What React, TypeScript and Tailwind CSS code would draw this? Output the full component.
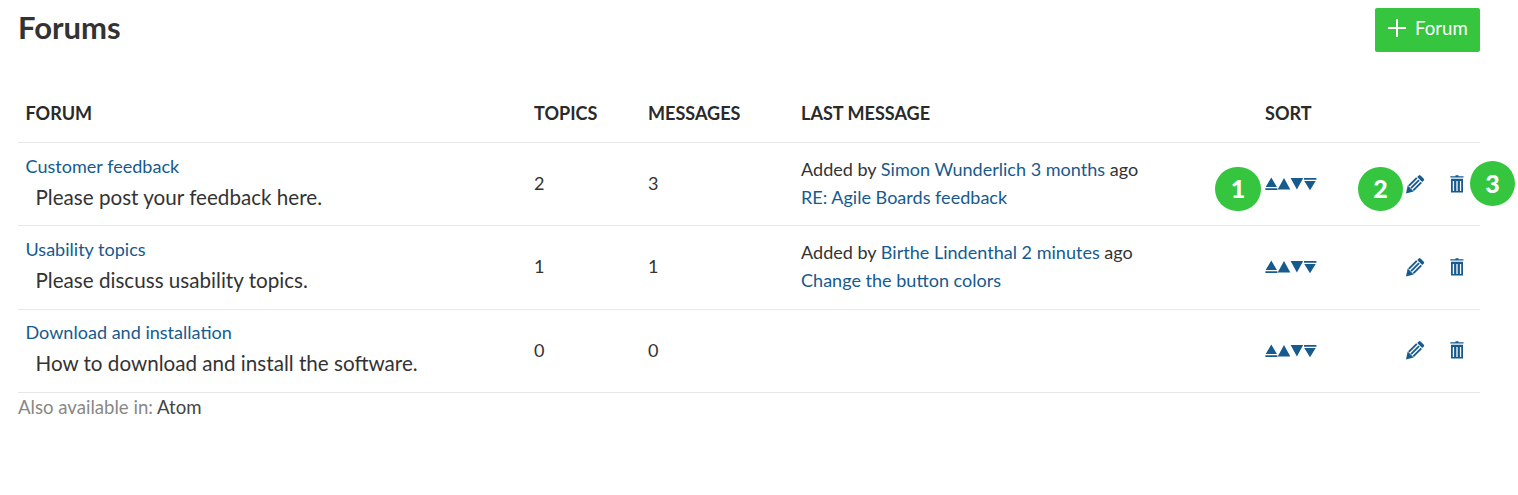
import React from "react";

type Message = { author: string; age: string; subject: string };
type Forum = {
  name: string;
  description: string;
  topics: number;
  messages: number;
  last?: Message;
};

const forums: Forum[] = [
  {
    name: "Customer feedback",
    description: "Please post your feedback here.",
    topics: 2,
    messages: 3,
    last: { author: "Simon Wunderlich", age: "3 months", subject: "RE: Agile Boards feedback" },
  },
  {
    name: "Usability topics",
    description: "Please discuss usability topics.",
    topics: 1,
    messages: 1,
    last: { author: "Birthe Lindenthal", age: "2 minutes", subject: "Change the button colors" },
  },
  {
    name: "Download and installation",
    description: "How to download and install the software.",
    topics: 0,
    messages: 0,
  },
];

const columns = "grid grid-cols-[508.5px_114px_153px_464px_140.5px_1fr] pl-[7.5px]";
const link = "text-[#175a8e]";

function SortIcons() {
  return (
    <svg width="52" height="14" viewBox="0 0 52 14" fill="currentColor">
      <path d="M6.3 0.5 11.9 10H0.7zM0.4 11.2h12v1.9h-12z" />
      <path d="M19 0.9 25.3 12.6H12.7z" />
      <path d="M25.6 1h12.6l-6.3 11.6z" />
      <path d="M39 0.9h12.4v1.9H39zM39.3 3.9h11.4L45 13.3z" />
    </svg>
  );
}

function PencilIcon() {
  return (
    <svg width="19" height="19" viewBox="0 0 19 19" fill="none" stroke="currentColor">
      <path d="M2.8 10.8 10.8 2.8M7.3 15.3 15.3 7.3M5.05 13.05 13.05 5.05" strokeWidth="1.9" />
      <path
        d="M11.2 2 12.8 0.5a1.2 1.2 0 0 1 1.7 0L17.8 3.7a1.2 1.2 0 0 1 0 1.7L16.2 7z"
        fill="currentColor"
        stroke="none"
      />
      <path d="M1.700 10.400 7.700 16.400 0 18.400z" fill="currentColor" stroke="none" />
    </svg>
  );
}

function TrashIcon() {
  return (
    <svg width="14" height="19" viewBox="0 0 14 19" fill="currentColor">
      <path d="M5.5 0.2h3v1.3h-3zM0.3 1.3h13.200v1.300H0.300z" />
      <path
        d="M1 3.8h12v13.800H1zM2.800 6v10h1.300V6zM6.350 6v10h1.300V6zM9.900 6v10h1.300V6z"
        fillRule="evenodd"
      />
    </svg>
  );
}

function Badge({ label, place }: { label: string; place: string }) {
  return (
    <span
      className={`absolute flex items-center justify-center rounded-full bg-[#35c53f] pb-[2px] text-[25px] font-black text-white ${place}`}
    >
      {label}
    </span>
  );
}

export default function App() {
  return (
    <main className="relative h-[495px] w-[1518px] overflow-hidden bg-white pl-[18px] pr-[38px] pt-2 font-['Lato',sans-serif] text-[18.06px] leading-7 text-[#333]">
      <header className="flex h-11 items-start justify-between">
        <h1 className="text-[31px] font-bold leading-[39px]">Forums</h1>
        <button className="flex h-[43.5px] w-[105px] items-center rounded-[2px] bg-[#35c53f] pb-[3px] pl-[13px] text-[18.6px] text-white">
          <svg className="mr-[9px]" width="18" height="18" viewBox="0 0 18 18" stroke="currentColor" strokeWidth="2">
            <path d="M9 0v18M0 9h18" />
          </svg>
          <span>Forum</span>
        </button>
      </header>

      <section className="mt-8">
        <div className={`${columns} h-[59px] items-center border-b border-[#e7e7e7] font-bold text-[#2a2a2a]`}>
          <span>FORUM</span>
          <span>TOPICS</span>
          <span>MESSAGES</span>
          <span>LAST MESSAGE</span>
          <span>SORT</span>
        </div>
        {forums.map((forum) => (
          <div key={forum.name} className={`${columns} h-[83.3px] items-center border-b border-[#e7e7e7]`}>
            <div className="pb-[5px] leading-[31px]">
              <a className={`${link} block`}>{forum.name}</a>
              <p className="pl-[10px] text-[20.64px]">{forum.description}</p>
            </div>
            <span className="pb-[2px]">{forum.topics}</span>
            <span className="pb-[2px]">{forum.messages}</span>
            <div className="pb-[3px]">
              {forum.last && (
                <>
                  <p>
                    Added by <a className={link}>{forum.last.author}</a>{" "}
                    <a className={link}>{forum.last.age}</a> ago
                  </p>
                  <a className={`${link} block`}>{forum.last.subject}</a>
                </>
              )}
            </div>
            <span className={link}><SortIcons /></span>
            <span className={`${link} flex items-center gap-[25px]`}>
              <PencilIcon />
              <TrashIcon />
            </span>
          </div>
        ))}
        <p className="text-[18.6px] text-[#888]">
          Also available in: <a className="text-[#444]">Atom</a>
        </p>
      </section>

      <Badge label="1" place="left-[1215px] top-[167px] h-[44px] w-[46px]" />
      <Badge label="2" place="left-[1358px] top-[167px] h-[44px] w-[45px]" />
      <Badge label="3" place="left-[1470px] top-[161px] h-[45px] w-[45px]" />
    </main>
  );
}
